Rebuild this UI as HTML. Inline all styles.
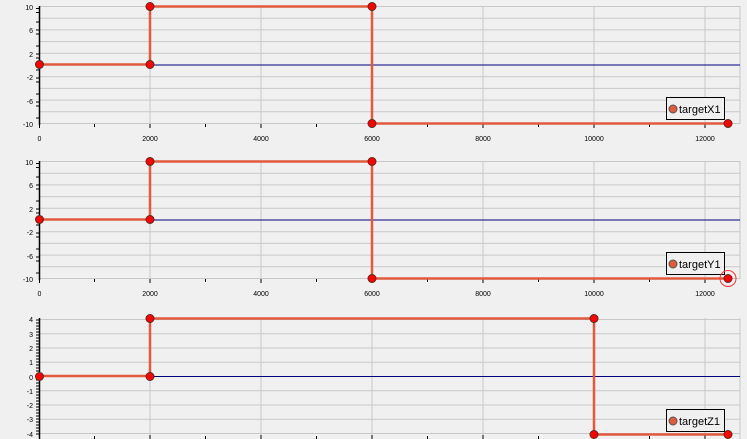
<!DOCTYPE html>
<html><head><meta charset="utf-8"><style>
html,body{margin:0;padding:0;background:#f0f0f0;width:747px;height:439px;overflow:hidden}
svg{display:block}
text{font-family:"Liberation Sans",sans-serif;font-size:7px;fill:#000}
.lg{font-size:11px}
</style></head><body>
<svg width="747" height="439" viewBox="0 0 747 439">
<defs>
<g id="grid1">
 <g stroke="#c8c8c8" stroke-width="1">
  <line x1="39" x2="740" y1="6.5" y2="6.5"/><line x1="39" x2="740" y1="18.2" y2="18.2"/>
  <line x1="39" x2="740" y1="29.9" y2="29.9"/><line x1="39" x2="740" y1="41.6" y2="41.6"/>
  <line x1="39" x2="740" y1="53.3" y2="53.3"/><line x1="39" x2="740" y1="76.7" y2="76.7"/>
  <line x1="39" x2="740" y1="88.4" y2="88.4"/><line x1="39" x2="740" y1="100.1" y2="100.1"/>
  <line x1="39" x2="740" y1="111.8" y2="111.8"/><line x1="39" x2="740" y1="123.5" y2="123.5"/>
  <line x1="150" x2="150" y1="6" y2="124"/><line x1="261" x2="261" y1="6" y2="124"/>
  <line x1="372" x2="372" y1="6" y2="124"/><line x1="483" x2="483" y1="6" y2="124"/>
  <line x1="594" x2="594" y1="6" y2="124"/><line x1="705" x2="705" y1="6" y2="124"/>
  <line x1="740" x2="740" y1="6" y2="124"/>
 </g>
 <line x1="150" x2="740" y1="65" y2="65" stroke="#000080" stroke-width="1"/>
 <g stroke="#000" stroke-width="1.5">
  <line x1="39.5" x2="39.5" y1="6" y2="125"/>
  <path d="M36 8.5h3M36 12.5h3M36 22h3M36 30h3M36 34h3M36 46h3M36 54h3M36 58h3M36 70h3M36 78h3M36 82h3M36 94h3M36 102h3M36 106h3M36 118h3" stroke-width="1"/>
  <path d="M39.5 124v4M94.5 124v3M150 124v4M205.5 124v3M261 124v4M316.5 124v3M372 124v4M427.5 124v3M483 124v4M538.5 124v3M594 124v4M649.5 124v3M705 124v4" stroke-width="1"/>
 </g>
 <path d="M39 64.5H150V6.5H372V123.5H727" fill="none" stroke="#e05a3c" stroke-width="2.5"/>
 <g fill="#f00" stroke="#5a2a20" stroke-width="1">
  <circle cx="39.5" cy="64.5" r="4"/><circle cx="150" cy="64.5" r="4"/>
  <circle cx="150" cy="6.5" r="4"/><circle cx="372" cy="6.5" r="4"/>
  <circle cx="372" cy="123.5" r="4"/><circle cx="728" cy="123.5" r="4"/>
 </g>
 <rect x="666.5" y="97.5" width="58" height="22" fill="#f0f0f0" stroke="#000"/>
 <circle cx="673" cy="109" r="4" fill="#e05a3c" stroke="#555"/>
</g>
</defs>

<use href="#grid1"/>
<use href="#grid1" y="155"/>
<circle cx="728" cy="278.5" r="8" fill="none" stroke="#f33" stroke-width="1"/>

<g text-anchor="end">
 <text x="33" y="10">10</text><text x="33" y="33">6</text><text x="33" y="57">2</text>
 <text x="33" y="80">-2</text><text x="33" y="104">-6</text><text x="33" y="127">-10</text>
 <text x="33" y="165">10</text><text x="33" y="188">6</text><text x="33" y="212">2</text>
 <text x="33" y="235">-2</text><text x="33" y="259">-6</text><text x="33" y="282">-10</text>
</g>
<g text-anchor="middle">
 <text x="39.5" y="141">0</text><text x="150" y="141">2000</text><text x="261" y="141">4000</text>
 <text x="372" y="141">6000</text><text x="483" y="141">8000</text><text x="594" y="141">10000</text><text x="705" y="141">12000</text>
 <text x="39.5" y="296">0</text><text x="150" y="296">2000</text><text x="261" y="296">4000</text>
 <text x="372" y="296">6000</text><text x="483" y="296">8000</text><text x="594" y="296">10000</text><text x="705" y="296">12000</text>
</g>
<text class="lg" x="679" y="113">targetX1</text>
<text class="lg" x="679" y="268">targetY1</text>

<!-- chart 3 -->
<g stroke="#c8c8c8" stroke-width="1">
 <line x1="39" x2="740" y1="319.5" y2="319.5"/><line x1="39" x2="740" y1="333.75" y2="333.75"/>
 <line x1="39" x2="740" y1="348" y2="348"/><line x1="39" x2="740" y1="362.25" y2="362.25"/>
 <line x1="39" x2="740" y1="390.75" y2="390.75"/><line x1="39" x2="740" y1="405" y2="405"/>
 <line x1="39" x2="740" y1="419.25" y2="419.25"/><line x1="39" x2="740" y1="433.5" y2="433.5"/>
 <line x1="150" x2="150" y1="318" y2="439"/><line x1="261" x2="261" y1="318" y2="439"/>
 <line x1="372" x2="372" y1="318" y2="439"/><line x1="483" x2="483" y1="318" y2="439"/>
 <line x1="594" x2="594" y1="318" y2="439"/><line x1="705" x2="705" y1="318" y2="439"/>
 <line x1="740" x2="740" y1="318" y2="439"/>
</g>
<line x1="150" x2="740" y1="376.5" y2="376.5" stroke="#000080"/>
<line x1="39.5" x2="39.5" y1="318" y2="439" stroke="#000" stroke-width="1.5"/>
<path d="M36 320h3M36 323h3M36 326h3M36 329h3M36 332h3M36 335h3M36 338h3M36 341h3M36 344h3M36 347h3M36 350h3M36 353h3M36 356h3M36 359h3M36 362h3M36 365h3M36 368h3M36 371h3M36 374h3M36 377h3M36 380h3M36 383h3M36 386h3M36 389h3M36 392h3M36 395h3M36 398h3M36 401h3M36 404h3M36 407h3M36 410h3M36 413h3M36 416h3M36 419h3M36 422h3M36 425h3M36 428h3M36 431h3M36 434h3M94.5 436v3M150 435v4M205.5 436v3M261 435v4M316.5 436v3M372 435v4M427.5 436v3M483 435v4M538.5 436v3M594 435v4M649.5 436v3M705 435v4" stroke="#000" stroke-width="1"/>
<g text-anchor="end">
 <text x="33" y="322">4</text><text x="33" y="337">3</text><text x="33" y="351">2</text><text x="33" y="365">1</text>
 <text x="33" y="380">0</text><text x="33" y="394">-1</text><text x="33" y="408">-2</text><text x="33" y="422">-3</text><text x="33" y="437">-4</text>
</g>
<path d="M39 376H150V318.5H594V434.5H727" fill="none" stroke="#e05a3c" stroke-width="2.5"/>
<g fill="#f00" stroke="#5a2a20" stroke-width="1">
 <circle cx="39.5" cy="376.5" r="4"/><circle cx="150" cy="376.5" r="4"/>
 <circle cx="150" cy="318.5" r="4"/><circle cx="594" cy="318.5" r="4"/>
 <circle cx="594" cy="434.5" r="4"/><circle cx="728" cy="434.5" r="4"/>
</g>
<rect x="666.5" y="409.5" width="58" height="22" fill="#f0f0f0" stroke="#000"/>
<circle cx="673" cy="421" r="4" fill="#e05a3c" stroke="#555"/>
<text class="lg" x="679" y="425">targetZ1</text>
</svg>
</body></html>
